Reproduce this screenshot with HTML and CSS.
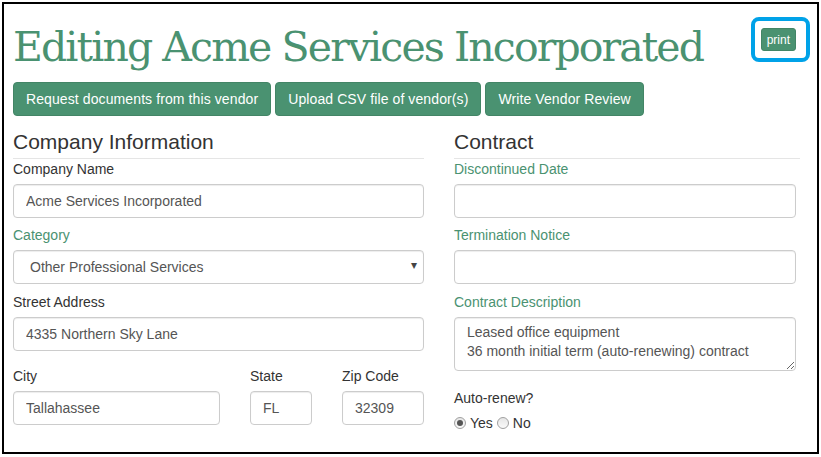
FILE: index.html
```html
<!DOCTYPE html>
<html lang="en">
  <head>
    <meta charset="UTF-8" />
    <title>Editing Acme Services Incorporated</title>
    <link rel="stylesheet" href="styles.css">
  </head>
  <body>
    <div class="frame">
      <div class="header">
        <h1>Editing Acme Services Incorporated</h1>
        <div class="print-mark">
          <button class="btn btn-xs">print</button>
        </div>
      </div>

      <div class="actions">
        <button class="btn">Request documents from this vendor</button>
        <button class="btn">Upload CSV file of vendor(s)</button>
        <button class="btn">Write Vendor Review</button>
      </div>

      <div class="columns">
        <div class="col col-left">
          <h3>Company Information</h3>
          <div class="form-group gap-sm">
            <label for="name">Company Name</label>
            <input type="text" id="name" value="Acme Services Incorporated" />
          </div>
          <div class="form-group gap-md">
            <label for="category" class="accent">Category</label>
            <div class="select-wrap">
              <select id="category">
                <option>Other Professional Services</option>
              </select>
            </div>
          </div>
          <div class="form-group gap-lg">
            <label for="street">Street Address</label>
            <input type="text" id="street" value="4335 Northern Sky Lane" />
          </div>
          <div class="address-row">
            <div class="form-group">
              <label for="city">City</label>
              <input type="text" id="city" value="Tallahassee" />
            </div>
            <div class="form-group">
              <label for="state">State</label>
              <input type="text" id="state" value="FL" />
            </div>
            <div class="form-group">
              <label for="zip">Zip Code</label>
              <input type="text" id="zip" value="32309" />
            </div>
          </div>
        </div>

        <div class="col col-right">
          <h3>Contract</h3>
          <div class="form-group gap-sm">
            <label for="discontinued" class="accent">Discontinued Date</label>
            <input type="text" id="discontinued" />
          </div>
          <div class="form-group gap-md">
            <label for="notice" class="accent">Termination Notice</label>
            <input type="text" id="notice" />
          </div>
          <div class="form-group gap-xl">
            <label for="description" class="accent">Contract Description</label>
            <textarea id="description">Leased office equipment
36 month initial term (auto-renewing) contract</textarea>
          </div>
          <div class="form-group">
            <label>Auto-renew?</label>
            <div class="radios">
              <input type="radio" name="renew" id="renew-yes" checked />
              <label for="renew-yes" class="inline">Yes</label>
              <input type="radio" name="renew" id="renew-no" />
              <label for="renew-no" class="inline">No</label>
            </div>
          </div>
        </div>
      </div>
    </div>
  </body>
</html>
```

FILE: styles.css
```css
/* Base */
body {
  margin: 0;
  font-family: "Liberation Sans", Arial, sans-serif;
  font-size: 14px;
  color: #333;
  background: #fff;
}

.frame {
  margin: 2px;
  width: 804px;
  height: 448px;
  border: 2px solid #000;
  padding: 0 0 0 9px;
  box-sizing: content-box;
  overflow: hidden;
}

/* Header */
.header {
  display: flex;
  justify-content: space-between;
  align-items: flex-start;
}

h1 {
  margin: 15px 0 0;
  font-family: "DejaVu Serif", "Liberation Serif", serif;
  font-weight: normal;
  font-size: 41px;
  line-height: 56px;
  color: #4a9271;
  letter-spacing: -1.9px;
  white-space: nowrap;
}

.print-mark {
  margin: 13px 7px 0 0;
  padding: 7px 10px 7px 6px;
  border: 4px solid #00a2e8;
  border-radius: 8px;
  display: flex;
}

/* Buttons */
.btn {
  background-color: #4a9271;
  color: #fff;
  border: 1px solid #438566;
  border-radius: 4px;
  font-family: "Liberation Sans", Arial, sans-serif;
  font-size: 14px;
  letter-spacing: 0.1px;
  height: 34px;
  padding: 0 12px;
  cursor: pointer;
}

.btn-xs {
  height: 23px;
  padding: 0 5px;
  font-size: 12px;
  letter-spacing: 0;
  border-radius: 3px;
}

.actions {
  display: flex;
  gap: 4px;
  margin-top: 7px;
}

/* Columns */
.columns {
  display: flex;
  gap: 30px;
  margin-top: 15px;
}

.col-left {
  width: 411px;
}

.col-right {
  width: 346px;
}

h3 {
  margin: 0;
  font-size: 21px;
  font-weight: normal;
  line-height: 22px;
  padding-bottom: 5px;
  border-bottom: 1px solid #e5e5e5;
  color: #333;
}

/* Form */
.form-group label {
  display: block;
  line-height: 20px;
  margin-bottom: 5px;
}

label.accent {
  color: #4a9271;
}

.gap-sm {
  margin-bottom: 7px;
}

.gap-md {
  margin-bottom: 8px;
}

.gap-lg {
  margin-bottom: 15px;
}

.gap-xl {
  margin-bottom: 17px;
}

input[type="text"],
select,
textarea {
  display: block;
  width: 100%;
  box-sizing: border-box;
  height: 34px;
  padding: 6px 12px;
  font-family: "Liberation Sans", Arial, sans-serif;
  font-size: 14px;
  color: #555;
  background: #fff;
  border: 1px solid #ccc;
  border-radius: 4px;
  box-shadow: inset 0 1px 1px rgba(0, 0, 0, 0.075);
}

.col-right input[type="text"],
.col-right textarea {
  width: 342px;
}

textarea {
  height: 54px;
  line-height: 19px;
  padding: 5px 12px;
  resize: vertical;
  overflow: hidden;
}

.select-wrap {
  position: relative;
}

select {
  appearance: none;
  padding-left: 16px;
}

.select-wrap::after {
  content: "\25BE";
  position: absolute;
  right: 7px;
  top: 8px;
  font-size: 12px;
  color: #444;
  pointer-events: none;
}

.address-row {
  display: grid;
  grid-template-columns: 207px 62px 82px;
  gap: 30px;
}

/* Radios */
.radios {
  display: flex;
  align-items: center;
  gap: 4px;
  margin-top: 1px;
}

.radios label.inline {
  display: inline;
  margin: 0;
  font-size: 14px;
}

input[type="radio"] {
  appearance: none;
  width: 12px;
  height: 12px;
  margin: 0;
  border: 1px solid #a0a0a0;
  border-radius: 50%;
  background: linear-gradient(#e6e6e6, #fafafa);
  position: relative;
}

input[type="radio"]:checked::after {
  content: "";
  position: absolute;
  left: 2px;
  top: 2px;
  width: 6px;
  height: 6px;
  border-radius: 50%;
  background: #555;
}
```
